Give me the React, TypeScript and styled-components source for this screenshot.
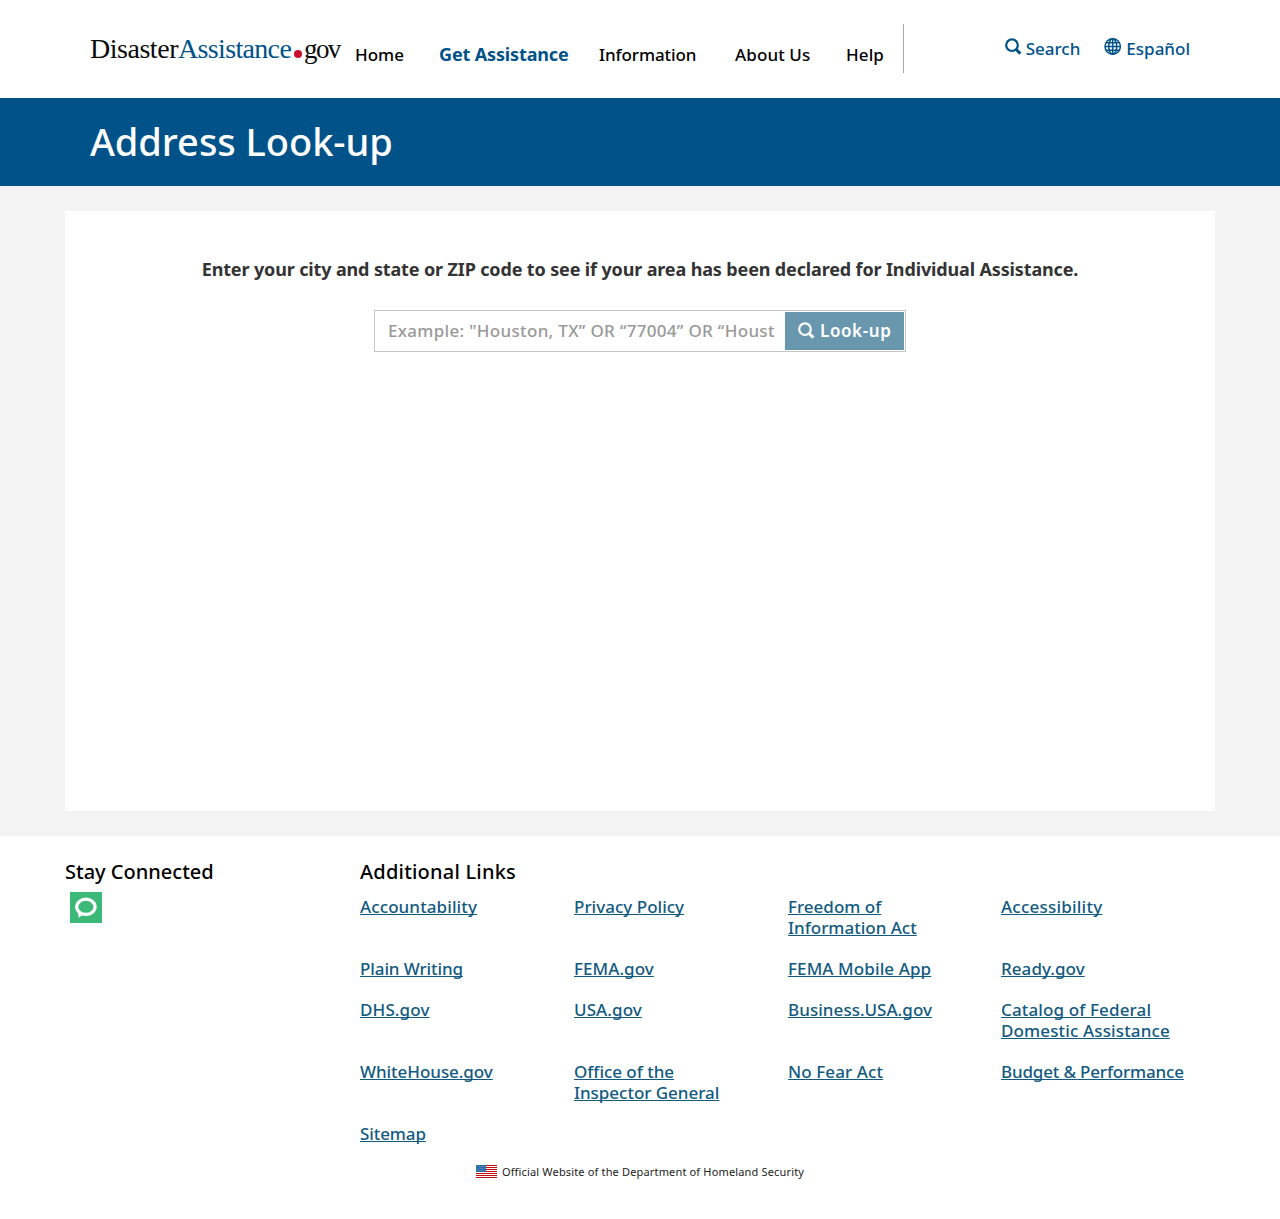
import React from "react";
import styled, { createGlobalStyle } from "styled-components";

const sans = `"Noto Sans", "Open Sans", sans-serif`;

const GlobalStyle = createGlobalStyle`
  *, *::before, *::after { box-sizing: border-box; }
  body { margin: 0; background: #fff; font-family: ${sans}; }
`;

const Page = styled.div`
  min-height: 1219px;
  background: #fff;
  color: #000;
  font: 500 17px/21px ${sans};
`;

const Header = styled.header`
  display: flex;
  align-items: flex-start;
  height: 98px;
  padding: 24px 90px 0;
`;

const Logo = styled.a`
  display: flex;
  width: 265px;
  padding-top: 9px;
  color: #0b0b0b;
  font: 400 28px/32px "Liberation Serif", "Times New Roman", serif;
  text-decoration: none;
  white-space: nowrap;
`;

const LogoPart = styled.span<{ $width: number; $spacing: number; $size?: number; $color?: string }>`
  width: ${(p) => p.$width}px;
  font-size: ${(p) => p.$size ?? 28}px;
  letter-spacing: ${(p) => p.$spacing}px;
  color: ${(p) => p.$color ?? "inherit"};
`;

const LogoDot = styled.span`
  width: 8px;
  height: 8px;
  margin: 17px 2px 0 3px;
  border-radius: 50%;
  background: #c8102e;
`;

const Nav = styled.nav`
  display: grid;
  grid-template-columns: 84px 160px 136px 111px 57px;
  height: 49px;
  padding-top: 20px;
  border-right: 1px solid #aaa;
`;

const NavLink = styled.a<{ $active?: boolean; $spacing?: number }>`
  color: ${(p) => (p.$active ? "#005288" : "#000")};
  font-size: ${(p) => (p.$active ? 18 : 17)}px;
  font-weight: ${(p) => (p.$active ? 700 : 500)};
  letter-spacing: ${(p) => p.$spacing ?? 0}px;
  text-decoration: none;
  white-space: nowrap;
`;

const Utilities = styled.div`
  display: flex;
  gap: 24px;
  margin-left: auto;
  padding-top: 14px;
`;

const UtilityLink = styled.a`
  display: flex;
  gap: 4px;
  color: #005288;
  text-decoration: none;
`;

const Banner = styled.div`
  height: 88px;
  padding: 21px 90px 0;
  background: #005288;
`;

const Title = styled.h1`
  margin: 0;
  color: #fff;
  font: 500 38px/44px ${sans};
  letter-spacing: -0.05px;
`;

const Main = styled.main`
  padding: 25px 65px;
  background: #f3f3f3;
`;

const Panel = styled.section`
  display: flex;
  flex-direction: column;
  align-items: center;
  height: 600px;
  padding-top: 48px;
  background: #fff;
`;

const Prompt = styled.p`
  margin: 0;
  color: #333;
  font-size: 18px;
  font-weight: 700;
  letter-spacing: -0.14px;
  white-space: nowrap;
`;

const SearchForm = styled.form`
  display: flex;
  width: 532px;
  height: 42px;
  margin-top: 30px;
  padding: 1px;
  border: 1px solid #c6c6c6;
`;

const SearchInput = styled.input`
  flex: 1;
  min-width: 0;
  padding: 0 10px 1px 12px;
  border: 0;
  outline: 0;
  background: #fff;
  font: 500 17px/21px ${sans};
  letter-spacing: 0.31px;
  &::placeholder { color: #999; opacity: 1; }
`;

const SearchButton = styled.button`
  display: flex;
  align-items: center;
  gap: 5px;
  width: 119px;
  padding: 0 0 1px 13px;
  border: 0;
  background: #6998ae;
  color: #fff;
  font: 600 17px/21px ${sans};
  letter-spacing: 0.6px;
  white-space: nowrap;
`;

const Footer = styled.footer`
  padding: 21px 65px 0;
`;

const FooterColumns = styled.div`
  display: grid;
  grid-template-columns: 295px 1fr;
`;

const FooterTitle = styled.h2<{ $spacing: number }>`
  margin: 0;
  padding-top: 1px;
  font: 500 20px/28px ${sans};
  letter-spacing: ${(p) => p.$spacing}px;
`;

const BadgeLink = styled.a`
  display: block;
  width: 32px;
  margin: 6px 0 0 5px;
  svg { display: block; }
`;

const LinkGrid = styled.ul`
  display: grid;
  grid-template-columns: 214px 214px 213px 214px;
  row-gap: 20px;
  margin: 10px 0 0;
  padding: 0;
  list-style: none;
`;

const LinkItem = styled.li`
  padding-right: 20px;
`;

const FooterLink = styled.a<{ $spacing: number }>`
  color: #125a80;
  letter-spacing: ${(p) => p.$spacing}px;
  text-decoration: underline;
  text-decoration-thickness: 1px;
  text-decoration-skip-ink: none;
  text-underline-offset: 1px;
`;

const Official = styled.div`
  display: flex;
  justify-content: center;
  align-items: flex-start;
  gap: 5px;
  margin-top: 20px;
  color: #222;
  font: 400 11px/16px ${sans};
  letter-spacing: 0.16px;
  svg { margin-top: 1px; }
`;

const SearchIcon = () => (
  <svg width="17" height="17" viewBox="0 0 17 17" fill="none" stroke="currentColor">
    <circle cx="7" cy="7.2" r="5.8" strokeWidth="2.2" />
    <path d="M11.2 11.5 15.4 15.6" strokeWidth="3" />
  </svg>
);

const GlobeIcon = () => (
  <svg width="18" height="18" viewBox="0 0 18 18" fill="none" stroke="currentColor" strokeWidth="1.5">
    <circle cx="8.7" cy="8.5" r="7.7" />
    <ellipse cx="8.7" cy="8.5" rx="4" ry="7.7" />
    <path d="M8.7 1v15M1 8.5h15.4M2.2 4.8h13M2.2 12.2h13" />
  </svg>
);

const BadgeIcon = () => (
  <svg width="32" height="31" viewBox="0 0 32 31">
    <rect width="32" height="31" fill="#3cb878" />
    <ellipse cx="15.9" cy="14.8" rx="9.2" ry="7.6" fill="none" stroke="#fff" strokeWidth="3.2" />
    <path d="M8 19 8.6 25.8 13 22.5Z" fill="#fff" />
  </svg>
);

const FlagIcon = () => (
  <svg width="21" height="13" viewBox="0 0 21 13" shapeRendering="crispEdges">
    <rect width="21" height="13" fill="#fff" />
    {[0, 2, 4, 6, 8, 10, 12].map((y) => (
      <rect key={y} y={y} width="21" height="1" fill="#c00d0d" />
    ))}
    <rect width="10" height="7" fill="#2f6ea5" />
    <path d="M1 1.5h8M2 3.5h7M1 5.5h8" stroke="#5b8fba" strokeDasharray="1 1" />
  </svg>
);

const footerLinks: [string, number][] = [
  ["Accountability", 0.1],
  ["Privacy Policy", 0.02],
  ["Freedom of Information Act", 0],
  ["Accessibility", 0.22],
  ["Plain Writing", -0.1],
  ["FEMA.gov", 0.05],
  ["FEMA Mobile App", 0.1],
  ["Ready.gov", 0.05],
  ["DHS.gov", 0.12],
  ["USA.gov", 0.1],
  ["Business.USA.gov", 0.06],
  ["Catalog of Federal Domestic Assistance", 0.13],
  ["WhiteHouse.gov", -0.05],
  ["Office of the Inspector\u00a0General", -0.03],
  ["No Fear Act", 0.1],
  ["Budget & Performance", -0.16],
  ["Sitemap", -0.1],
];

export default function App() {
  return (
    <Page>
      <GlobalStyle />
      <Header>
        <Logo>
          <LogoPart $width={88} $spacing={-0.47}>Disaster</LogoPart>
          <LogoPart $width={113} $spacing={-0.66} $color="#005288">Assistance</LogoPart>
          <LogoDot />
          <LogoPart $width={37} $spacing={-1.6} $size={27}>gov</LogoPart>
        </Logo>
        <Nav>
          <NavLink>Home</NavLink>
          <NavLink $active $spacing={-0.14}>Get Assistance</NavLink>
          <NavLink $spacing={-0.08}>Information</NavLink>
          <NavLink $spacing={0.12}>About Us</NavLink>
          <NavLink $spacing={0.1}>Help</NavLink>
        </Nav>
        <Utilities>
          <UtilityLink><SearchIcon />Search</UtilityLink>
          <UtilityLink><GlobeIcon />Español</UtilityLink>
        </Utilities>
      </Header>
      <Banner>
        <Title>Address Look-up</Title>
      </Banner>
      <Main>
        <Panel>
          <Prompt>Enter your city and state or ZIP code to see if your area has been declared for Individual Assistance.</Prompt>
          <SearchForm onSubmit={(e) => e.preventDefault()}>
            <SearchInput placeholder={'Example: "Houston, TX” OR “77004” OR “Houston”'} />
            <SearchButton><SearchIcon />Look-up</SearchButton>
          </SearchForm>
        </Panel>
      </Main>
      <Footer>
        <FooterColumns>
          <div>
            <FooterTitle $spacing={0}>Stay Connected</FooterTitle>
            <BadgeLink><BadgeIcon /></BadgeLink>
          </div>
          <div>
            <FooterTitle $spacing={0.21}>Additional Links</FooterTitle>
            <LinkGrid>
              {footerLinks.map(([label, spacing]) => (
                <LinkItem key={label}>
                  <FooterLink $spacing={spacing}>{label}</FooterLink>
                </LinkItem>
              ))}
            </LinkGrid>
          </div>
        </FooterColumns>
        <Official>
          <FlagIcon />
          Official Website of the Department of Homeland Security
        </Official>
      </Footer>
    </Page>
  );
}
